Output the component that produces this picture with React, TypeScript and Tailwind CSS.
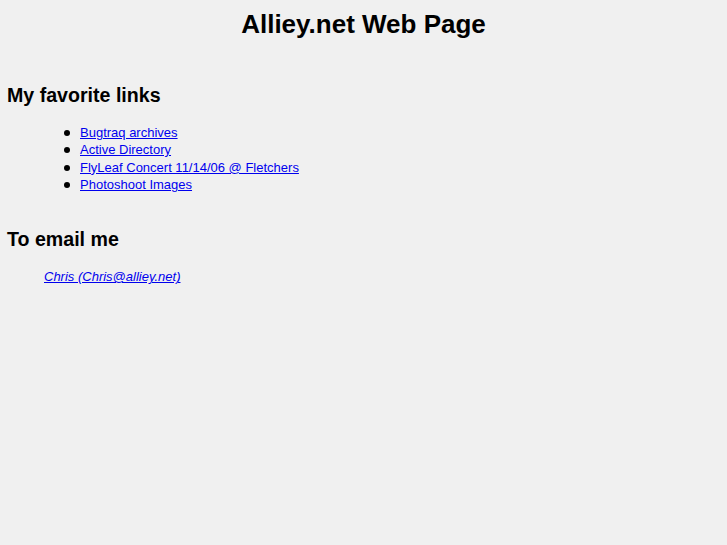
const links = [
  "Bugtraq archives",
  "Active Directory",
  "FlyLeaf Concert 11/14/06 @ Fletchers",
  "Photoshoot Images",
];

export default function App() {
  return (
    <div className="min-h-screen bg-[#f0f0f0] px-[7px] pt-[10px] font-['Liberation_Sans',Arial,sans-serif] text-black">
      <h1 className="text-center text-[26px] font-bold leading-[28px]">Alliey.net Web Page</h1>

      <h2 className="mt-[46px] text-[19.6px] font-bold leading-[22px]">My favorite links</h2>
      <ul className="mt-[18px] pl-[73px] text-[13px] leading-[17.3px]">
        {links.map((l) => (
          <li
            key={l}
            className="relative before:absolute before:left-[-16px] before:top-[6px] before:h-[6px] before:w-[6px] before:rounded-full before:bg-black before:content-['']"
          >
            <a href="#" className="text-[#0000ee] underline">
              {l}
            </a>
          </li>
        ))}
      </ul>

      <h2 className="mt-[35px] text-[19.6px] font-bold leading-[22px]">To email me</h2>
      <address className="mt-[18px] pl-[37px] text-[13px] leading-[17px] italic">
        <a href="#" className="text-[#0000ee] underline">
          Chris (Chris@alliey.net)
        </a>
      </address>
    </div>
  );
}
